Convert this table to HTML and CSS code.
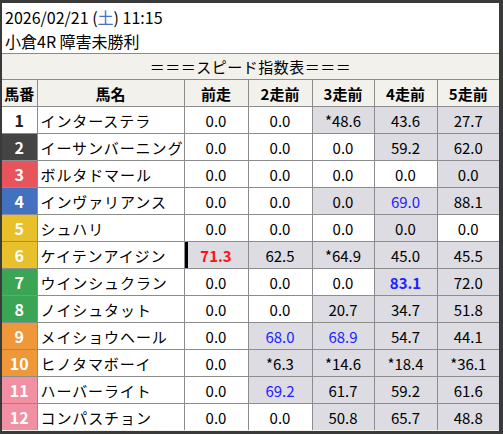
FILE: index.html
```html
<!DOCTYPE html>
<html lang="ja">
<head>
<meta charset="utf-8">
<link rel="stylesheet" href="styles.css">
</head>
<body>
<div class="frame">
  <div class="panel">
    <div class="title">
      <div class="line">2026/02/21 (<span class="sat">土</span>) 11:15</div>
      <div class="line">小倉4R 障害未勝利</div>
    </div>
    <table class="grid">
      <colgroup>
        <col class="c-num"><col class="c-name"><col class="c-v"><col class="c-v"><col class="c-v2"><col class="c-v3"><col class="c-v4">
      </colgroup>
      <thead>
        <tr><th colspan="7" class="caption">＝＝＝スピード指数表＝＝＝</th></tr>
        <tr class="hdr"><th>馬番</th><th>馬名</th><th>前走</th><th>2走前</th><th>3走前</th><th>4走前</th><th>5走前</th></tr>
      </thead>
      <tbody>
        <tr><td class="n w1">1</td><td class="nm">インターステラ</td><td>0.0</td><td>0.0</td><td class="g">*48.6</td><td class="g">43.6</td><td class="g">27.7</td></tr>
        <tr><td class="n w2">2</td><td class="nm">イーサンバーニング</td><td>0.0</td><td>0.0</td><td>0.0</td><td class="g">59.2</td><td class="g">62.0</td></tr>
        <tr><td class="n w3">3</td><td class="nm">ボルタドマール</td><td>0.0</td><td>0.0</td><td>0.0</td><td>0.0</td><td class="g">0.0</td></tr>
        <tr><td class="n w4">4</td><td class="nm">インヴァリアンス</td><td>0.0</td><td>0.0</td><td class="g">0.0</td><td class="g blue">69.0</td><td class="g">88.1</td></tr>
        <tr><td class="n w5">5</td><td class="nm">シュハリ</td><td>0.0</td><td>0.0</td><td>0.0</td><td class="g">0.0</td><td>0.0</td></tr>
        <tr><td class="n w5">6</td><td class="nm">ケイテンアイジン</td><td class="g red mark">71.3</td><td class="g">62.5</td><td class="g">*64.9</td><td class="g">45.0</td><td class="g">45.5</td></tr>
        <tr><td class="n w6">7</td><td class="nm">ウインシュクラン</td><td>0.0</td><td>0.0</td><td>0.0</td><td class="g blue b">83.1</td><td class="g">72.0</td></tr>
        <tr><td class="n w6">8</td><td class="nm">ノイシュタット</td><td>0.0</td><td>0.0</td><td class="g">20.7</td><td class="g">34.7</td><td class="g">51.8</td></tr>
        <tr><td class="n w7">9</td><td class="nm">メイショウヘール</td><td>0.0</td><td class="g blue">68.0</td><td class="g blue">68.9</td><td class="g">54.7</td><td class="g">44.1</td></tr>
        <tr><td class="n w7">10</td><td class="nm">ヒノタマボーイ</td><td>0.0</td><td class="g">*6.3</td><td class="g">*14.6</td><td class="g">*18.4</td><td class="g">*36.1</td></tr>
        <tr><td class="n w8">11</td><td class="nm">ハーバーライト</td><td>0.0</td><td class="g blue">69.2</td><td class="g">61.7</td><td class="g">59.2</td><td class="g">61.6</td></tr>
        <tr><td class="n w8">12</td><td class="nm">コンパスチョン</td><td>0.0</td><td>0.0</td><td class="g">50.8</td><td class="g">65.7</td><td class="g">48.8</td></tr>
      </tbody>
    </table>
  </div>
</div>
</body>
</html>
```
FILE: styles.css
```css
html, body {
  margin: 0;
  padding: 0;
  background: #3a3a3a;
}
body {
  font-family: "Noto Sans CJK JP", "Noto Sans", sans-serif;
  color: #000;
}
.frame {
  width: 503px;
  height: 434px;
  box-sizing: border-box;
  padding: 3px 4px 3px 2px;
  background: #3a3a3a;
}
.panel {
  background: #f2f1ec;
  height: 100%;
  overflow: hidden;
}
.title {
  background: #fff;
  height: 51px;
  box-sizing: border-box;
  padding: 2px 0 0 3px;
  font-size: 16px;
  line-height: 24px;
  border-bottom: 1px solid #8a8a8a;
}
.sat {
  color: #4b6fc4;
}
.grid {
  width: 497px;
  border-collapse: collapse;
  table-layout: fixed;
  font-size: 15px;
}
.c-num { width: 35px; }
.c-name { width: 147px; }
.c-v { width: 64px; }
.c-v2 { width: 62px; }
.c-v3 { width: 63px; }
.c-v4 { width: 62px; }
.grid th, .grid td {
  border: 1px solid #8c8c8c;
  height: 26px;
  padding: 0;
  text-align: center;
  white-space: nowrap;
  overflow: hidden;
}
.grid th.caption {
  font-weight: normal;
  border-top: none;
  border-left: none;
  border-right: none;
  height: 25px;
  letter-spacing: 0.5px;
}
.hdr th {
  font-weight: bold;
  background: #f2f1ec;
}
.hdr th:first-child { border-left: none; }
.grid td:first-child { border-left: none; }
.grid tr > *:last-child { border-right: none; }
tbody tr:last-child td { border-bottom: none; }
tbody td {
  background: #fff;
}
td.nm {
  text-align: left;
  padding-left: 3px;
  letter-spacing: 0.9px;
}
td.n {
  font-weight: bold;
  color: #fff;
  font-size: 16px;
}
td.w1 { background: #fff; color: #222; }
td.w2 { background: #444; }
td.w3 { background: #e8545c; }
td.w4 { background: #4470c0; }
td.w5 { background: #e8c02c; }
td.w6 { background: #3aa655; }
td.w7 { background: #ef983a; }
td.w8 { background: #f090a2; }
td.g { background: #dcdce2; }
td.blue { color: #2222ff; }
td.b { font-weight: bold; }
td.red { color: #ff1111; font-weight: bold; }
td.mark { box-shadow: inset 3px 0 0 #000; }
```
